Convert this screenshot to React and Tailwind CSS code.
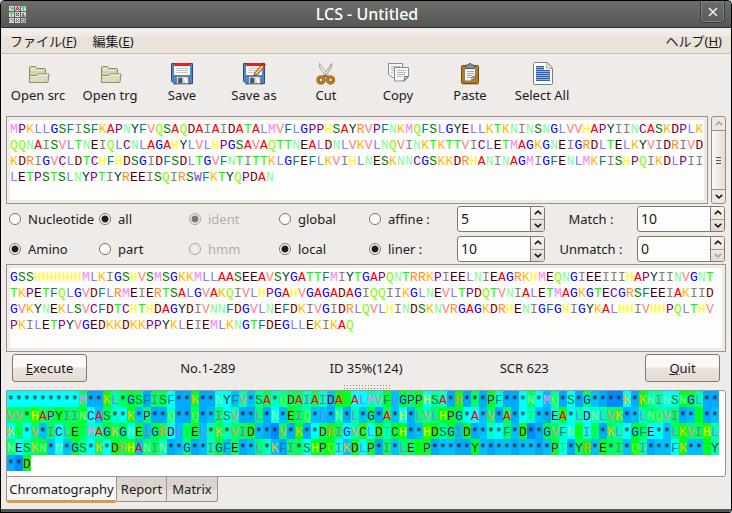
import React, { useState } from 'react';

const LETTER = {
  A: 'text-[#ff0000]', C: 'text-[#800080]', D: 'text-[#800000]', E: 'text-[#400010]',
  F: 'text-[#008080]', G: 'text-[#0000ff]', H: 'text-[#ffff00]', I: 'text-[#808080]',
  K: 'text-[#ffbb00]', L: 'text-[#7f7fff]', M: 'text-[#ff7fff]', N: 'text-[#7fff9f]',
  P: 'text-[#800080]', Q: 'text-[#7fff00]', R: 'text-[#ff8c1a]', S: 'text-[#008000]',
  T: 'text-[#00ff00]', V: 'text-[#ff7f7f]', W: 'text-[#7f3fff]', Y: 'text-[#004030]',
  '*': 'text-[#101010]',
};

const SHADE = {
  c: 'bg-[#00ffff]', d: 'bg-[#00bfff]', s: 'bg-[#00aaff]', b: 'bg-[#0088ff]',
  t: 'bg-[#00ffcc]', m: 'bg-[#00ffaa]', g: 'bg-[#00ff66]', e: 'bg-[#00ff22]', l: 'bg-[#22ff00]',
};

const TARGET = [
  'MPKLLGSFISFKAPNYFVQSAQDAIAIDATALMVFLGPPHSAYRVPFNKMQFSLGYELLKTKNINSNGLVVHAPYIINCASKDPLK',
  'QQNAISVLTNEIQLCNLAGAHYLVLHPGSAVAQTTNEALDNLVKVLNQVINKTKTTVICLETMAGKGNEIGRDLTELKYVIDRIVD',
  'KDRIGVCLDTCHFHDSGIDFSDLTGVFNTITTKLGFEFLKVIHLNESKNNCGSKKDRHANINAGMIGFENLMKFISHPQIKDLPII',
  'LETPSTSLNYPTIYREEISQIRSWFKTYQPDAN',
];

const QUERY = [
  'GSSHHHHHHMLKIGSHVSMSGKKMLLAASEEAVSYGATTFMIYTGAPQNTRRKPIEELNIEAGRKHMEQNGIEEIIIHAPYIINVGNT',
  'TKPETFQLGVDFLRMEIERTSALGVAKQIVLHPGAHVGAGADAGIQQIIKGLNEVLTPDQTVNIALETMAGKGTECGRSFEEIAKIID',
  'GVKYNEKLSVCFDTCHTHDAGYDIVNNFDGVLNEFDKIVGIDRLQVLHINDSKNVRGAGKDRHENIGFGHIGYKALHHIVHHPQLTHV',
  'PKILETPYVGEDKKDKKPPYKLEIEMLKNGTFDEGLLEKIKAQ',
];

const ALIGNED = [
  ['*********M**KL*GSFISF**K**NYFV*SA*QDAIAIDATALMVFLGPPHSA*R***PF***N*MQ*S*G****K*KNINSNGL**',
    'cccccccccg ssemgegsgg cssessccdm dmgtmggtgt deeccmtede gecmtsesgs etsscgcdms csgdsbbcse mmcceemss'],
  ['VV*HAPYIINCAS**K*P**Q**Q**ISV**L*N*EIQ*L*N*L*G*A*H*LVLHPG*A*V*A**T**EA*LDNLVK**LNQVI**T**',
    'ggglggegge cdgtcedgss tssgsdgcms sgscdegmdd smsmdesgdc sgmgeeeccd gsgsctdste cmctmggsdm gmmgsdesd'],
  ['KT*V*ICLETMAGKGNEIGRDLTEL*K*VID***V*K**DRIGVCLDTCH**HDSGID****F*D**GVFNTIT*KL*GFE**LKVIHL',
    'cgcgdgcgeg tmegecedeg cdgedmgmgg edsbgsescg egcmlcetee sdlemedesd tcgdebsegt cecgsgmceg ccdgegglm'],
  ['NESKN*N*GS*K*DRHANIN**G**IGFE**L*KFI*SHPQIKDLP*I*LETP*****Y*********PT*YR*E*I*QI***FK**TY',
    'gcmgedcdem cgcegldggm sdgsdmedgs dgtdsggcee ecdecesgdg geesddssed sddsddsdec sgedeggdem sddceddem'],
  ['**D', 'sbe'],
].map(([text, shades]) => [text, shades.replaceAll(' ', '')]);

function Cells({ text, shades }) {
  return [...text].map((ch, i) => (
    <span key={i} className={`flex w-2 shrink-0 justify-center ${LETTER[ch]} ${shades ? SHADE[shades[i]] : ''}`}>{ch}</span>
  ));
}

const MONO = "font-['Liberation_Mono',monospace] text-[13px] leading-[19px]";

function FolderIcon() {
  return (
    <svg viewBox="0 0 24 24" className="size-6">
      <path d="M3.500 19V5.500q0-1 1-1h5l1.500 2h7.500q1 0 1 1V13" fill="#d3d0ae" stroke="#8d8a70" />
      <path d="M5 6.500h4.500M5 8.500h13" stroke="#eeecd8" />
      <path d="M3.500 20.500v-6.500q0-.5 1-.5H11l1-1.500h11l-1 8q-.2.500-1 .500z" fill="#dedbbd" stroke="#8d8a70" />
      <path d="M5 14.500h6.500l1-1.500H22" stroke="#f3f1e2" fill="none" />
    </svg>
  );
}

function SaveIcon({ pencil }) {
  return (
    <svg viewBox="0 0 24 24" className="size-6">
      <path d="M3 22.500h18" stroke="#bdb8b4" />
      <path d="M1.500 1.500h21v20H4l-2.500-2.500z" fill="#4f83c4" stroke="#1f4b87" />
      <rect x="4" y="2" width="16" height="11" fill="#fbfbfb" />
      <rect x="4" y="1" width="16" height="3" fill="#ee1c24" />
      <path d="M6 6.500h12M6 8.500h12M6 10.500h12" stroke="#c5c8ca" />
      <path d="M6.500 14.500h12v7h-12z" fill="#d5d8d6" stroke="#7a8288" />
      <rect x="8.500" y="16" width="3.500" height="5" rx="1" fill="#2f5f9f" stroke="#454d55" strokeWidth=".7" />
      <path d="M15 16l2 5" stroke="#fff" strokeWidth="2" />
      {pencil && (
        <g>
          <path d="M13 10.500L20.500 2l2.500 2-7.500 8.500-3.300 1z" fill="#f5a84a" stroke="#8b4b14" strokeWidth=".9" />
          <path d="M19.600 3L21.500.8l2 1.700-1.800 2.200z" fill="#c9302c" stroke="#7a2020" strokeWidth=".7" />
          <path d="M14.300 11.300L21 4" stroke="#ffe0ac" />
          <path d="M12 13.700l1.300-.4-.9-.9z" fill="#222" />
        </g>
      )}
    </svg>
  );
}

function CutIcon() {
  return (
    <svg viewBox="0 0 24 24" className="size-6" fill="none">
      <path d="M5.500 1.500c-1 3 2 8 7.500 13l1.500-1.500C11 9 7.500 5 5.500 1.500z" fill="#f4f4f2" stroke="#999b98" strokeWidth=".9" />
      <path d="M17.500 1.500c1 3-2 8-7 13L9 13c3.500-4 6.500-7.500 8.500-11.500z" fill="#e8e8e6" stroke="#8c8e8b" strokeWidth=".9" />
      <ellipse cx="7" cy="18" rx="3" ry="3" stroke="#7b4d08" strokeWidth="3.200" />
      <ellipse cx="16.500" cy="18" rx="3" ry="3" stroke="#7b4d08" strokeWidth="3.200" />
      <ellipse cx="7" cy="18" rx="3" ry="3" stroke="#c98a22" strokeWidth="1.600" />
      <ellipse cx="16.500" cy="18" rx="3" ry="3" stroke="#c98a22" strokeWidth="1.600" />
      <path d="M9.500 15.500l2-2 2.500 2" stroke="#9a6414" strokeWidth="2" />
    </svg>
  );
}

function CopyIcon() {
  return (
    <svg viewBox="0 0 24 24" className="size-6" fill="none">
      <path d="M2.500 1.500h14v14h-10l-4-3z" fill="#f6f6f5" stroke="#8a8c88" />
      <path d="M5 4.500h9M5 6.500h3M5 8.500h3M5 10.500h2" stroke="#b8bab6" />
      <path d="M8.500 5.500h14v9l-4 4.500h-10z" fill="#fafafa" stroke="#8a8c88" />
      <path d="M11 8.500h9M11 10.500h9M11 12.500h8M11 14.500h5" stroke="#b8bab6" />
      <path d="M18 19l.5-4.500h4z" fill="#d3d4d1" stroke="#70736e" />
    </svg>
  );
}

function PasteIcon() {
  return (
    <svg viewBox="0 0 24 24" className="size-6" fill="none">
      <path d="M4 22.500h17" stroke="#c4beb8" />
      <rect x="3.500" y="3.500" width="17" height="18" rx="1" fill="#b9771c" stroke="#7d4b08" />
      <path d="M6.500 5.500h11v8.500l-4 5h-7z" fill="#f4f4f2" stroke="#85837c" />
      <path d="M9 9.500h7M9 11.500h7M9 13.500h5M9 15.500h4" stroke="#a9aba7" />
      <path d="M13.500 19l.5-4.500 3.500-.5z" fill="#d2d3d0" stroke="#6c6e69" strokeWidth=".8" />
      <path d="M7.500 6.500V4q0-1 1-1h1.500q.5-1.500 2-1.500T14 3h1.500q1 0 1 1v2.500z" fill="#8d908b" stroke="#50534e" />
    </svg>
  );
}

function SelectAllIcon() {
  return (
    <svg viewBox="0 0 24 24" className="size-6" fill="none">
      <path d="M4.500.5q-1 0-1 1v20q0 1 1 1h17q1 0 1-1V6L17 .5z" fill="#fdfdfd" stroke="#7e807c" />
      <path d="M17 .5l-.5 5.500 6 .5z" fill="#ececea" stroke="#8d8f8b" strokeWidth=".8" />
      <path d="M6 4h8v4h6v11H6z" fill="#8fb2e3" />
      <path d="M6 4.500h8M6 6.500h8M6 8.500h14M6 10.500h14M6 12.500h14M6 14.500h14M6 16.500h14M6 18.500h14" stroke="#2d5fae" />
    </svg>
  );
}

const TOOLS = [
  ['Open src', <FolderIcon />], ['Open trg', <FolderIcon />], ['Save', <SaveIcon />], ['Save as', <SaveIcon pencil />],
  ['Cut', <CutIcon />], ['Copy', <CopyIcon />], ['Paste', <PasteIcon />], ['Select All', <SelectAllIcon />],
];

function Chevron({ up, faded }) {
  return (
    <svg viewBox="0 0 8 5" className={`h-[5px] w-2 ${faded ? 'text-[#aaa39c]' : 'text-[#1a1a1a]'}`}>
      <path d={up ? 'M.8 4.200L4 1.200l3.200 3' : 'M.8.8L4 3.800 7.200.8'} fill="none" stroke="currentColor" strokeWidth="1.600" />
    </svg>
  );
}

function Radio({ name, label, disabled, on }) {
  return (
    <label className={`flex items-center gap-[7px] ${disabled ? 'text-[#b5aea8]' : ''}`}>
      <input
        type="radio"
        name={name}
        defaultChecked={on}
        disabled={disabled}
        className="ml-[3px] size-[12px] shrink-0 appearance-none rounded-full border border-[#7c7067] bg-white checked:bg-[radial-gradient(circle,#1d1d1d_0,#1d1d1d_3px,#fff_4px)] disabled:border-[#aaa097] disabled:bg-[#f0ebe8] disabled:checked:bg-[radial-gradient(circle,#7f776c_0,#7f776c_3px,#f0ebe8_4px)]"
      />
      <span className="whitespace-nowrap">{label}</span>
    </label>
  );
}

function Spin({ label, initial, min }) {
  const [value, setValue] = useState(initial);
  return (
    <div className="mr-px ml-px flex h-[26px] overflow-hidden rounded-[3px] border border-[#85786b] bg-[#fdfdfc]">
      <input
        aria-label={label}
        value={value}
        inputMode="numeric"
        onChange={(e) => setValue(Number(e.target.value) || 0)}
        className="w-0 min-w-0 grow bg-transparent px-[3px] text-[14px] outline-none"
      />
      <div className="flex w-3.5 flex-col border-l border-[#85786b] bg-linear-to-b from-[#f8f5f3] to-[#e3dad4]">
        <button aria-label={`${label} up`} onClick={() => setValue(value + 1)} className="flex grow items-center justify-center border-b border-[#a89c92]"><Chevron up /></button>
        <button aria-label={`${label} down`} disabled={min} onClick={() => setValue(value - 1)} className="flex grow items-center justify-center"><Chevron faded={min} /></button>
      </div>
    </div>
  );
}

function ScrollBar() {
  return (
    <div className="flex w-[15px] flex-col overflow-hidden rounded-[3px] border border-[#9a8e84] bg-[#ede7e3]">
      <button aria-label="Scroll up" className="flex h-3.5 items-center justify-center border-b border-[#9a8e84]"><Chevron up faded /></button>
      <div className="flex grow flex-col items-center justify-center gap-[2px] bg-linear-to-r from-[#faf8f7] to-[#e4dcd6]">
        <span className="h-px w-[5px] bg-[#555]" /><span className="h-px w-[5px] bg-[#555]" /><span className="h-px w-[5px] bg-[#555]" />
      </div>
      <button aria-label="Scroll down" className="flex h-3.5 items-center justify-center border-t border-[#9a8e84]"><Chevron /></button>
    </div>
  );
}

const BUTTON = 'h-7 w-[75px] rounded-[3px] border border-[#85786b] bg-linear-to-b from-[#fbfaf9] from-45% via-[#ece5df] via-50% to-[#e4dbd4]';

const LOGO = [
  { c: '#777777', d: 'M1 1l3 3M4 1v2' }, { c: '#e01030', d: 'M.5 4.500L2.500.5l2 4M1.500 3.500h2' }, { c: '#20d040', d: 'M.5 1h4M2.500 1v3.500' },
  { c: '#20d040', d: 'M.5 1h4M2.500 1v3.500' }, { c: '#444444', d: 'M1 1l3 3M4 1L1 4' }, { c: '#444444', d: 'M2 1v3.500M1 4h3' },
  { c: '#e060e0', d: 'M.5 4V1.500h3.500V4' }, { c: '#666666', d: 'M1 1l3 3M4 1L1 4' }, { c: '#666666', d: 'M1 1h3v3H1z' },
];

export default function App() {
  return (
    <div className="bg-[#c9dcec]">
      <div className="flex min-h-screen flex-col overflow-hidden rounded-t-[5px] rounded-br-[5px] border-x border-t border-black bg-[#efebe7] font-['Noto_Sans','Noto_Sans_CJK_JP',sans-serif] text-[13px] leading-4 text-[#1a1a1a]">
        <header className="flex h-[27px] items-center border-b border-[#2f312f] bg-linear-to-b from-[#6b6e6b] to-[#545754] pr-[6px] pl-2">
          <svg viewBox="0 0 17 17" className="h-[17px] w-[25px]" preserveAspectRatio="xMinYMid meet">
            {LOGO.map(({ c, d }, i) => (
              <g key={i} transform={`translate(${(i % 3) * 6} ${Math.floor(i / 3) * 6})`}>
                <rect width="5" height="5" fill="#d8d8d6" />
                <path d={d} stroke={c} fill="none" />
              </g>
            ))}
          </svg>
          <h1 className="grow text-center text-[16px] font-medium text-white">LCS - Untitled</h1>
          <button aria-label="Close" className="mb-1 flex h-[22px] w-[25px] items-center justify-center rounded-b-[4px] border border-t-0 border-[#3c3e3c] shadow-[inset_0_0_0_1px_#7d807d]">
            <svg viewBox="0 0 10 10" className="size-[10px]"><path d="M1 1l8 8M9 1L1 9" stroke="#eee" strokeWidth="1.600" /></svg>
          </button>
        </header>

        <nav className="flex h-[26px] items-center gap-4 border-b border-[#c9c0b4] bg-linear-to-b from-[#f0ebe8] from-30% to-[#ebe2da] to-35% px-[9px]">
          <button>ファイル(<u>F</u>)</button>
          <button>編集(<u>E</u>)</button>
          <button className="ml-auto">ヘルプ(<u>H</u>)</button>
        </nav>

        <div className="flex bg-[#efebe9] px-px pt-2 pb-[13px]">
          {TOOLS.map(([label, icon]) => (
            <button key={label} className="flex w-[72px] flex-col items-center gap-px whitespace-nowrap">
              {icon}
              <span>{label}</span>
            </button>
          ))}
        </div>

        <main className="flex flex-col bg-[#efebe9] px-[5px]">
          <div className="flex gap-[3px]">
            <div className="min-w-0 grow border border-[#a0948a] p-[3px]">
              <div className={`h-[80px] overflow-hidden bg-[#fdfdfc] ${MONO}`}>
                {TARGET.map((line, i) => (
                  <div key={i} className={`flex h-4 ${i < 3 ? 'justify-between' : ''}`}><Cells text={line} /></div>
                ))}
              </div>
            </div>
            <ScrollBar />
          </div>

          <div className="grid grid-cols-8 items-center gap-y-1 py-0.5">
            <Radio name="kind" label="Nucleotide" />
            <Radio name="range" label="all" on />
            <Radio name="mode" label="ident" on disabled />
            <Radio name="scope" label="global" />
            <Radio name="gap" label="affine :" />
            <Spin label="affine" initial={5} />
            <span className="text-center">Match :</span>
            <Spin label="Match" initial={10} />
            <Radio name="kind" label="Amino" on />
            <Radio name="range" label="part" />
            <Radio name="mode" label="hmm" disabled />
            <Radio name="scope" label="local" on />
            <Radio name="gap" label="liner :" on />
            <Spin label="liner" initial={10} />
            <span className="text-center">Unmatch :</span>
            <Spin label="Unmatch" initial={0} min />
          </div>

          <div className="border border-[#a0948a] p-[3px]">
            <div className={`h-[80px] overflow-hidden bg-[#fdfdfc] ${MONO}`}>
              {QUERY.map((line, i) => <div key={i} className="flex h-4"><Cells text={line} /></div>)}
            </div>
          </div>

          <div className="flex items-center justify-between px-1.5 py-[2px] text-center">
            <button className={BUTTON}><u>E</u>xecute</button>
            <span className="w-[75px] whitespace-nowrap">No.1-289</span>
            <span className="w-[75px] whitespace-nowrap">ID 35%(124)</span>
            <span className="w-[75px] whitespace-nowrap">SCR 623</span>
            <button className={BUTTON}><u>Q</u>uit</button>
          </div>
          <div className="mx-auto mb-px h-[5px] w-[47px] bg-[radial-gradient(circle,#8f857b_0.5px,transparent_1px)] bg-size-[3px_3px]" />

          <section className="h-[87px] overflow-hidden rounded-r-[3px] border border-[#a0948a] bg-white">
            <div className={MONO}>
              {ALIGNED.map(([text, shades], i) => <div key={i} className="flex h-4"><Cells text={text} shades={shades} /></div>)}
            </div>
          </section>

          <div role="tablist" className="flex items-start pb-1.5">
            <button role="tab" aria-selected="true" className="h-[26px] w-[111px] rounded-b-[3px] border border-t-0 border-b-[3px] border-[#a0948a] border-b-[#dc9a4c] bg-[#f7f5f3]">Chromatography</button>
            <button role="tab" aria-selected="false" className="h-[25px] w-[50px] border border-t-0 border-l-0 border-[#a0948a] bg-linear-to-b from-[#dbd4ce] from-50% to-[#eae4df] to-60%">Report</button>
            <button role="tab" aria-selected="false" className="h-[25px] w-[51px] rounded-br-[3px] border border-t-0 border-l-0 border-[#a0948a] bg-linear-to-b from-[#dbd4ce] from-50% to-[#eae4df] to-60%">Matrix</button>
          </div>
        </main>
        <footer className="mt-auto h-[5px] border-b-2 border-black bg-[#555755]" />
      </div>
    </div>
  );
}
